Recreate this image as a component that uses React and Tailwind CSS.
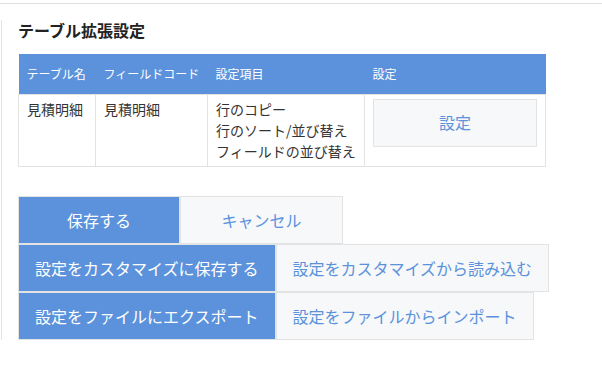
const font = { fontFamily: '"Noto Sans CJK JP", "Noto Sans", sans-serif' };

const rows = [
  {
    table: "見積明細",
    code: "見積明細",
    items: ["行のコピー", "行のソート/並び替え", "フィールドの並び替え"],
  },
];

function Btn({ primary, children }) {
  return (
    <button
      className={
        primary
          ? "h-[48px] min-w-[162px] px-4 border border-[#e3e3e3] bg-[#5b92db] text-white text-[16px] leading-none"
          : "h-[48px] min-w-[163px] px-4 border border-[#e3e3e3] bg-[#f6f8fa] text-[#5b92db] text-[16px] leading-none"
      }
    >
      {children}
    </button>
  );
}

export default function App() {
  return (
    <div className="w-[602px] h-[371px] bg-white text-[#333]" style={font}>
      <div className="h-[4px] border-b border-[#e0e0e0]" />
      <div className="ml-[1px] mt-4 border-l border-[#e3e3e3] pl-4">
        <h2 className="text-[16px] leading-[20px] font-bold text-[#222]">テーブル拡張設定</h2>

        <table className="mt-[14px] w-[527px] table-fixed border-collapse text-left">
          <colgroup>
            <col className="w-[77px]" />
            <col className="w-[112px]" />
            <col className="w-[157px]" />
            <col className="w-[181px]" />
          </colgroup>
          <thead>
            <tr className="h-[40px] bg-[#5b92db] text-white text-[12px]">
              <th className="px-2 font-normal">テーブル名</th>
              <th className="px-2 font-normal whitespace-nowrap">フィールドコード</th>
              <th className="px-2 font-normal">設定項目</th>
              <th className="px-2 font-normal">設定</th>
            </tr>
          </thead>
          <tbody>
            {rows.map((r) => (
              <tr key={r.code} className="text-[14px] leading-[21px] align-top">
                <td className="border border-[#e3e3e3] px-2 py-1">{r.table}</td>
                <td className="border border-[#e3e3e3] px-2 py-1">{r.code}</td>
                <td className="border border-[#e3e3e3] px-2 py-1">
                  {r.items.map((it) => (
                    <div key={it}>{it}</div>
                  ))}
                </td>
                <td className="border border-[#e3e3e3] px-2 py-1">
                  <button className="w-full h-[48px] border border-[#e3e3e3] bg-[#f6f8fa] text-[#5b92db] text-[16px]">
                    設定
                  </button>
                </td>
              </tr>
            ))}
          </tbody>
        </table>

        <div className="mt-[29px] flex flex-col items-start">
          <div className="flex">
            <Btn primary>保存する</Btn>
            <Btn>キャンセル</Btn>
          </div>
          <div className="flex">
            <Btn primary>設定をカスタマイズに保存する</Btn>
            <Btn>設定をカスタマイズから読み込む</Btn>
          </div>
          <div className="flex">
            <Btn primary>設定をファイルにエクスポート</Btn>
            <Btn>設定をファイルからインポート</Btn>
          </div>
        </div>
      </div>
    </div>
  );
}
